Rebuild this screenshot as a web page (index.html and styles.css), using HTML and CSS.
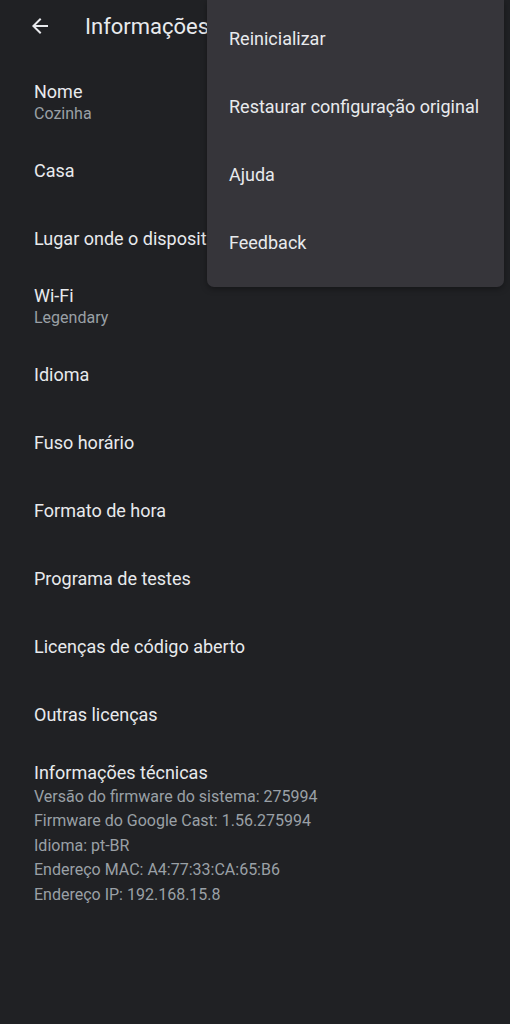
FILE: index.html
```html
<!DOCTYPE html>
<html lang="pt-BR">
<head>
<meta charset="utf-8">
<title>Informações do dispositivo</title>
<link rel="stylesheet" href="styles.css">
</head>
<body>
<div class="screen">
  <header class="appbar">
    <button class="back" aria-label="Voltar">
      <svg width="24" height="24" viewBox="0 0 24 24"><path d="M20 11H7.83l5.59-5.59L12 4l-8 8 8 8 1.41-1.41L7.83 13H20v-2z" fill="#e8eaed"/></svg>
    </button>
    <h1 class="title">Informações do dispositivo</h1>
  </header>
  <ul class="list">
    <li class="row"><span class="label">Nome</span><span class="sub">Cozinha</span></li>
    <li class="row"><span class="label">Casa</span></li>
    <li class="row"><span class="label clip">Lugar onde o dispositivo está</span></li>
    <li class="row"><span class="label">Wi-Fi</span><span class="sub">Legendary</span></li>
    <li class="row"><span class="label">Idioma</span></li>
    <li class="row"><span class="label">Fuso horário</span></li>
    <li class="row"><span class="label">Formato de hora</span></li>
    <li class="row"><span class="label">Programa de testes</span></li>
    <li class="row"><span class="label">Licenças de código aberto</span></li>
    <li class="row"><span class="label">Outras licenças</span></li>
  </ul>
  <section class="tech">
    <div class="label">Informações técnicas</div>
    <div class="sub first">Versão do firmware do sistema: 275994</div>
    <div class="sub">Firmware do Google Cast: 1.56.275994</div>
    <div class="sub">Idioma: pt-BR</div>
    <div class="sub">Endereço MAC: A4:77:33:CA:65:B6</div>
    <div class="sub">Endereço IP: 192.168.15.8</div>
  </section>
  <div class="menu">
    <div class="menu-item">Reinicializar</div>
    <div class="menu-item">Restaurar configuração original</div>
    <div class="menu-item">Ajuda</div>
    <div class="menu-item">Feedback</div>
  </div>
</div>
</body>
</html>
```
FILE: styles.css
```css
* { box-sizing: border-box; }
html, body { margin: 0; padding: 0; background: #202124; }
body { font-family: Roboto, "Noto Sans", sans-serif; color: #e8eaed; }
.screen { position: relative; width: 510px; height: 1024px; overflow: hidden; background: #202124; }
.appbar { height: 52px; display: flex; align-items: center; }
.back { width: 24px; height: 24px; margin-left: 28px; padding: 0; border: 0; background: none; display: flex; }
.title { margin: 0 0 0 33px; width: 122px; overflow: hidden; font-size: 22px; font-weight: 400; white-space: nowrap; color: #e8eaed; }
.list { list-style: none; margin: 0; padding: 0; margin-top: 16px; }
.row { height: 68px; padding-left: 34px; display: flex; flex-direction: column; justify-content: center; }
.label { font-size: 18px; line-height: 23px; color: #e8eaed; white-space: nowrap; }
.label.clip { width: 173px; overflow: hidden; }
.sub { font-size: 16px; line-height: 24.4px; color: #9aa0a6; white-space: nowrap; }
.row .sub { line-height: 22px; }
.tech { padding: 13px 0 0 34px; display: flex; flex-direction: column; }
.tech .sub.first { margin-top: 1px; }
.menu { position: absolute; top: 0; left: 207px; width: 297px; padding: 4px 0 11px; background: #36353a; border-radius: 0 0 7px 7px; box-shadow: 0 2px 6px rgba(0,0,0,.35); }
.menu-item { height: 68px; display: flex; align-items: center; padding-left: 22px; font-size: 18px; color: #e8eaed; white-space: nowrap; }
```
